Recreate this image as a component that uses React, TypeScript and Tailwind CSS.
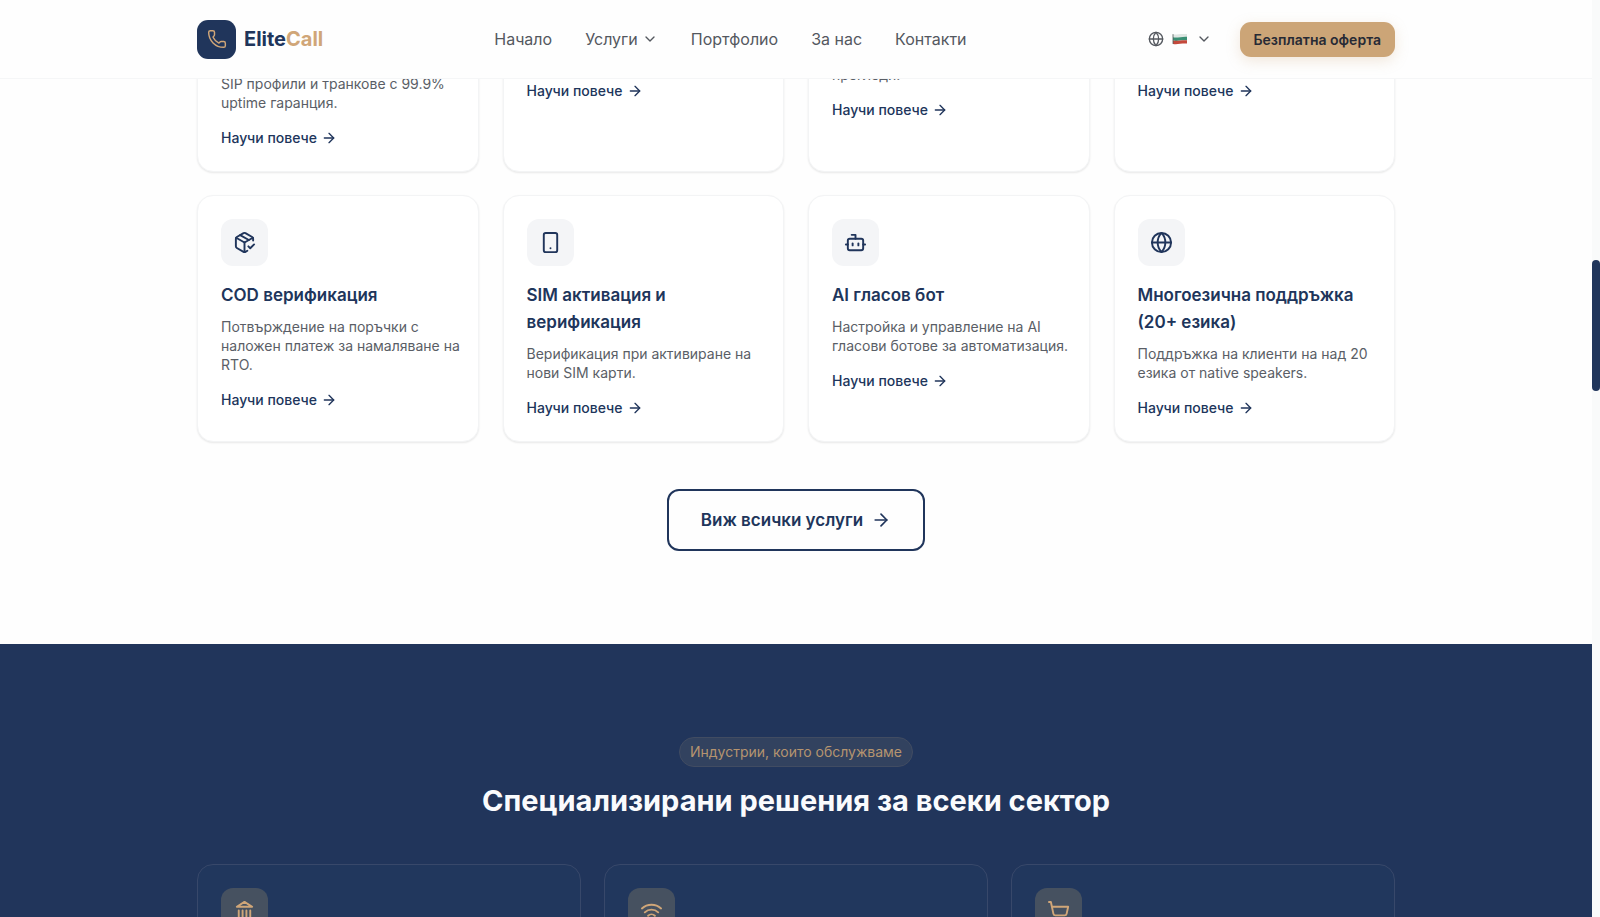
import type { ReactNode } from "react";
import {
  ArrowRight,
  Bot,
  ChevronDown,
  Globe,
  PackageCheck,
  Phone,
  ShoppingCart,
  Smartphone,
  Wifi,
  type LucideIcon,
} from "lucide-react";

type Service = { icon: LucideIcon; title: string; text: string };

const previousServices = [
  { id: "sip", text: "SIP профили и транкове с 99.9% uptime гаранция.", offset: "pt-[26px]" },
  { id: "second", text: "", offset: "pt-[33px]" },
  { id: "third", text: "прегледи.", offset: "pt-[17px]" },
  { id: "fourth", text: "", offset: "pt-[33px]" },
];

const services: Service[] = [
  { icon: PackageCheck, title: "COD верификация", text: "Потвърждение на поръчки с наложен платеж за намаляване на RTO." },
  { icon: Smartphone, title: "SIM активация и верификация", text: "Верификация при активиране на нови SIM карти." },
  { icon: Bot, title: "AI гласов бот", text: "Настройка и управление на AI гласови ботове за автоматизация." },
  { icon: Globe, title: "Многоезична поддръжка (20+ езика)", text: "Поддръжка на клиенти на над 20 езика от native speakers." },
];

function BankIcon() {
  return (
    <svg
      width="23"
      height="23"
      viewBox="0 0 24 24"
      fill="none"
      stroke="currentColor"
      strokeWidth="2"
      strokeLinecap="round"
      strokeLinejoin="round"
      aria-hidden="true"
    >
      <path d="M3 22h18M6 18v-7M10 18v-7M14 18v-7M18 18v-7" />
      <path d="M12 2l8 5H4z" />
    </svg>
  );
}

const industries: { id: string; icon: ReactNode }[] = [
  { id: "finance", icon: <BankIcon /> },
  { id: "telecom", icon: <Wifi size={23} /> },
  { id: "commerce", icon: <ShoppingCart size={23} /> },
];

function LearnMore() {
  return (
    <a href="#" className="flex w-fit items-center gap-1 text-[14px] leading-5 font-medium text-[#20355b]">
      Научи повече
      <ArrowRight size={16} />
    </a>
  );
}

function BulgarianFlag() {
  return (
    <svg width="16" height="12" viewBox="0 0 16 12" aria-hidden="true">
      <path d="M1 1.2C4 2.2 6 .6 15 1v3C9 3.7 5 5.4 1 4.4Z" fill="#dfe6e3" />
      <path d="M1 4.2C5 5.2 9 3.4 15 3.7v3.6C9 7 5 8.6 1 7.6Z" fill="#3a8f74" />
      <path d="M1 7.4C5 8.4 9 6.9 15 7.2v3.3C9 10.2 5 11.8 1 10.9Z" fill="#c4493c" />
      <path d="M1 1.2v9.7" stroke="#4b5a58" strokeWidth="0.8" />
    </svg>
  );
}

function Header() {
  return (
    <header className="relative z-10 h-[79px] shrink-0 border-b border-[#f5f6f7] bg-[#fefefe]">
      <div className="mx-auto flex h-full max-w-[1198px] items-center justify-between">
        <a href="#" className="flex items-center gap-2">
          <span className="flex size-[39px] items-center justify-center rounded-[11px] bg-[#20355b] text-[#d0a678]">
            <Phone size={20} strokeWidth={1.75} />
          </span>
          <span className="text-[20px] leading-7 font-bold text-[#20355b]">
            Elite<span className="text-[#d0a678]">Call</span>
          </span>
        </a>
        <nav className="flex items-center gap-[33px] text-[16px] leading-6 text-[#54585f]">
          <a href="#">Начало</a>
          <button type="button" className="flex items-center gap-1">
            Услуги
            <ChevronDown size={16} />
          </button>
          <a href="#">Портфолио</a>
          <a href="#">За нас</a>
          <a href="#">Контакти</a>
        </nav>
        <div className="flex items-center gap-7">
          <button type="button" aria-label="Език" className="flex items-center gap-2 py-2 pl-2.5 text-[#54585f]">
            <Globe size={16} />
            <BulgarianFlag />
            <ChevronDown size={16} />
          </button>
          <button
            type="button"
            className="rounded-[11px] bg-[#cca577] px-3.5 py-2 text-[14px] leading-[19px] font-semibold text-[#272a35] shadow-[0_4px_14px_rgba(204,165,119,0.25)]"
          >
            Безплатна оферта
          </button>
        </div>
      </div>
    </header>
  );
}

function Services() {
  const card = "rounded-2xl border border-[#f3f4f5] bg-white pl-[23px] shadow-[0_1px_2px_rgba(0,0,0,0.09)]";
  const body = "mb-4 text-[14px] leading-[19px] text-[#5a5e66]";
  return (
    <section className="bg-[#fefefe] pb-[93px]">
      <div className="mx-auto max-w-[1198px]">
        <div className="-mt-8 grid grid-cols-4 gap-x-6">
          {previousServices.map(({ id, text, offset }) => (
            <article key={id} className={`${card} h-[125px] pr-4 ${offset}`}>
              {text && <p className={body}>{text}</p>}
              <LearnMore />
            </article>
          ))}
        </div>
        <div className="mt-[23px] grid grid-cols-4 gap-x-6">
          {services.map(({ icon: Icon, title, text }) => (
            <article key={title} className={`${card} py-[23px] pr-4`}>
              <div className="flex size-[47px] items-center justify-center rounded-xl bg-[#f4f5f7] text-[#20355b]">
                <Icon size={23} />
              </div>
              <h3 className="mt-4 text-[17px] leading-[27px] font-semibold text-[#20355b]">{title}</h3>
              <p className={`mt-2 ${body}`}>{text}</p>
              <LearnMore />
            </article>
          ))}
        </div>
        <div className="mt-[47px] flex justify-center">
          <button
            type="button"
            className="flex items-center gap-2 rounded-xl border-2 border-[#20355b] px-8 py-4 text-[17px] leading-[26px] font-semibold text-[#20355b]"
          >
            Виж всички услуги
            <ArrowRight size={20} />
          </button>
        </div>
      </div>
    </section>
  );
}

function Industries() {
  return (
    <section className="flex-1 bg-[#21355b] pt-[93px]">
      <div className="mx-auto flex max-w-[1198px] flex-col items-center">
        <span className="rounded-full border border-[#414c62] bg-[#32425f] px-2.5 py-1 text-[14px] leading-5 text-[#b5946f]">
          Индустрии, които обслужваме
        </span>
        <h2 className="mt-[15px] text-[29px] leading-[37px] font-bold text-[#fafbfd]">
          Специализирани решения за всеки сектор
        </h2>
        <div className="mt-[45px] grid w-full grid-cols-3 gap-[23px]">
          {industries.map(({ id, icon }) => (
            <article key={id} className="h-[240px] rounded-2xl border border-[#38486a] bg-[#21375d] p-[23px]">
              <div className="flex size-[47px] items-center justify-center rounded-xl bg-[#465160] text-[#d0a678]">
                {icon}
              </div>
            </article>
          ))}
        </div>
      </div>
    </section>
  );
}

export default function App() {
  return (
    <div className="flex h-screen overflow-hidden bg-[#fefefe] font-['Inter',sans-serif]">
      <div className="flex min-w-0 flex-1 flex-col">
        <Header />
        <main className="flex min-h-0 flex-1 flex-col overflow-hidden">
          <Services />
          <Industries />
        </main>
      </div>
      <div className="w-2 shrink-0 bg-[#f9fafa] pt-[260px]" aria-hidden="true">
        <div className="h-[131px] rounded-full bg-[#20355b]" />
      </div>
    </div>
  );
}
